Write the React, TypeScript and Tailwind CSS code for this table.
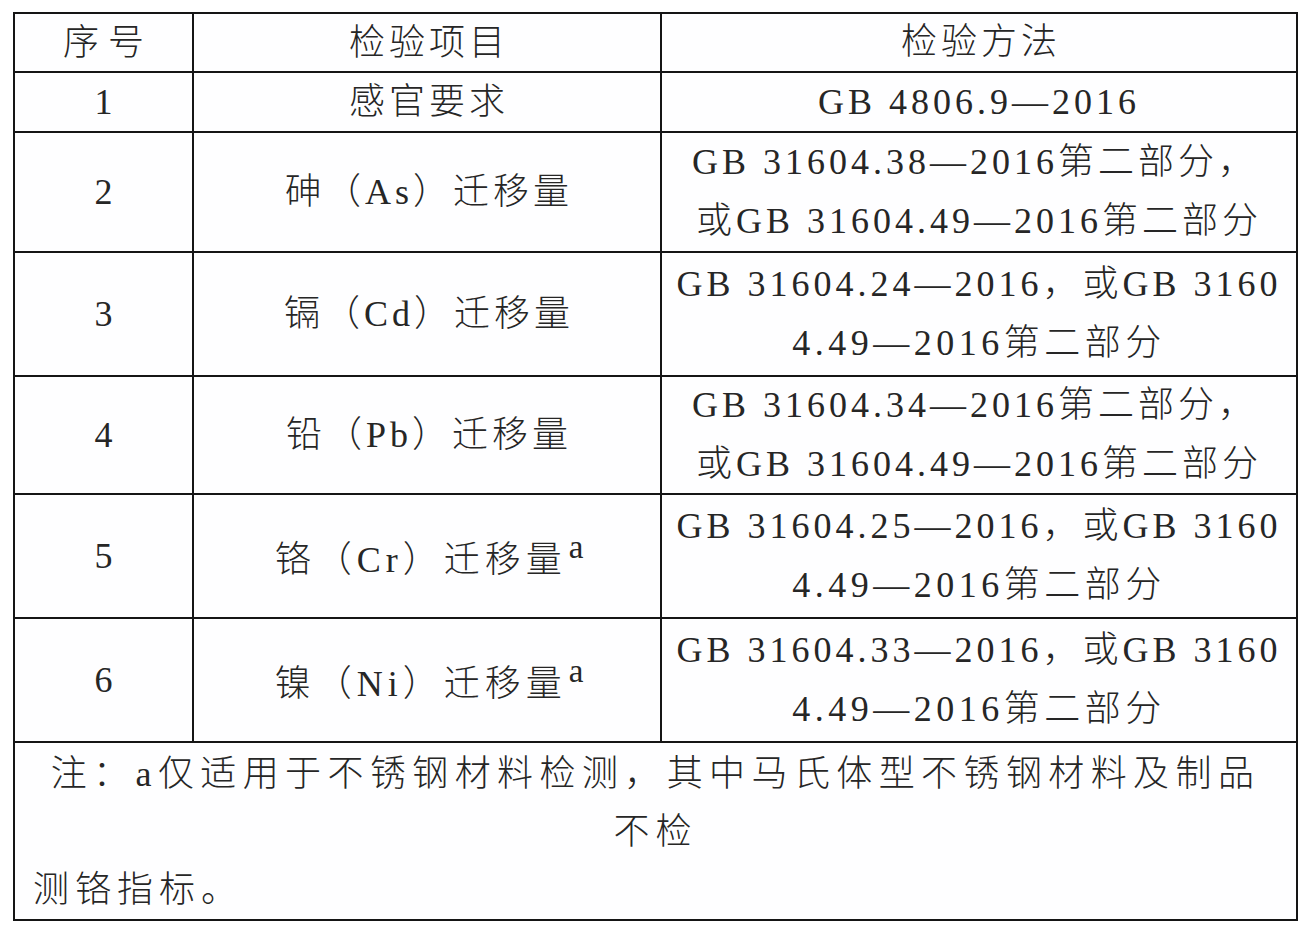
import React from "react";

const F = "font-['Liberation_Serif','Noto_Sans_CJK_SC',serif] font-light text-[#262626]";

function Row({
  h,
  n,
  item,
  method,
}: {
  h: string;
  n: React.ReactNode;
  item: React.ReactNode;
  method: React.ReactNode;
}) {
  return (
    <div className={`flex ${h} border-b-2 border-[#151515]`}>
      <div className="w-[179px] shrink-0 border-r-2 border-[#151515] flex items-center justify-center text-[36px]">
        {n}
      </div>
      <div className="w-[468px] shrink-0 border-r-2 border-[#151515] flex items-center justify-center text-[36px]">
        {item}
      </div>
      <div className="flex-1 flex flex-col items-center justify-center text-[36px] leading-[59px]">
        {method}
      </div>
    </div>
  );
}

function Sup() {
  return <span className="relative -top-[14px] text-[33px] ml-[2px] tracking-normal">a</span>;
}

export default function App() {
  return (
    <div className={`min-h-[936px] w-[1308px] bg-white pt-[12px] pl-[13px] ${F}`}>
      <div className="w-[1285px] border-2 border-[#151515] bg-[#fefeff]">
        <Row
          h="h-[59px]"
          n={<span className="tracking-[9px] pl-[9px]">序号</span>}
          item={<span className="tracking-[4px] pl-[4px]">检验项目</span>}
          method={<span className="tracking-[4px] pl-[4px]">检验方法</span>}
        />
        <Row
          h="h-[60px]"
          n="1"
          item={<span className="tracking-[4px] pl-[4px]">感官要求</span>}
          method={<span className="tracking-[4px]">GB 4806.9—2016</span>}
        />
        <Row
          h="h-[120px]"
          n="2"
          item={<span className="tracking-[4px] pl-[4px]">砷（As）迁移量</span>}
          method={
            <>
              <span className="tracking-[4px] pr-[8px]">GB 31604.38—2016第二部分，</span>
              <span className="tracking-[4px]">或GB 31604.49—2016第二部分</span>
            </>
          }
        />
        <Row
          h="h-[124px]"
          n="3"
          item={<span className="tracking-[4px] pl-[4px]">镉（Cd）迁移量</span>}
          method={
            <>
              <span className="tracking-[4px]">GB 31604.24—2016，或GB 3160</span>
              <span className="tracking-[4.5px]">4.49—2016第二部分</span>
            </>
          }
        />
        <Row
          h="h-[118px]"
          n="4"
          item={<span className="tracking-[4px] pl-[4px]">铅（Pb）迁移量</span>}
          method={
            <>
              <span className="tracking-[4px] pr-[8px]">GB 31604.34—2016第二部分，</span>
              <span className="tracking-[4px]">或GB 31604.49—2016第二部分</span>
            </>
          }
        />
        <Row
          h="h-[124px]"
          n="5"
          item={
            <span className="tracking-[5px] pl-[4px] pt-[8px]">
              铬（Cr）迁移量
              <Sup />
            </span>
          }
          method={
            <>
              <span className="tracking-[4px]">GB 31604.25—2016，或GB 3160</span>
              <span className="tracking-[4.5px]">4.49—2016第二部分</span>
            </>
          }
        />
        <Row
          h="h-[124px]"
          n="6"
          item={
            <span className="tracking-[5px] pl-[4px] pt-[8px]">
              镍（Ni）迁移量
              <Sup />
            </span>
          }
          method={
            <>
              <span className="tracking-[4px]">GB 31604.33—2016，或GB 3160</span>
              <span className="tracking-[4.5px]">4.49—2016第二部分</span>
            </>
          }
        />
        <div className="h-[176px] pt-[2px] text-[36px] leading-[58px]">
          <div className="text-center tracking-[6.4px]">注：a仅适用于不锈钢材料检测，其中马氏体型不锈钢材料及制品</div>
          <div className="text-center tracking-[6px]">不检</div>
          <div className="pl-[18px] tracking-[6px]">测铬指标。</div>
        </div>
      </div>
    </div>
  );
}
